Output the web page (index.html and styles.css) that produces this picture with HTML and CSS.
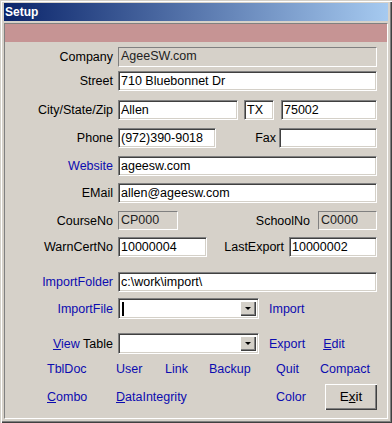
FILE: index.html
```html
<!DOCTYPE html>
<html lang="en">
<head>
  <meta charset="UTF-8">
  <title>Setup</title>
  <link rel="stylesheet" href="styles.css">
</head>
<body>
  <div class="window">
    <div class="titlebar">Setup</div>
    <div class="client">
      <div class="band"></div>
      <div class="form">
        <div class="row">
          <span class="label">Company</span>
          <span class="field disabled w-full">AgeeSW.com</span>
        </div>
        <div class="row row-street">
          <span class="label">Street</span>
          <span class="field w-full">710 Bluebonnet Dr</span>
        </div>
        <div class="row row-city">
          <span class="label">City/State/Zip</span>
          <span class="field w-city">Allen</span>
          <span class="field w-state">TX</span>
          <span class="field w-zip">75002</span>
        </div>
        <div class="row">
          <span class="label">Phone</span>
          <span class="field w-phone">(972)390-9018</span>
          <span class="label-inline">Fax</span>
          <span class="field w-phone"></span>
        </div>
        <div class="row">
          <span class="label link">Website</span>
          <span class="field w-full">ageesw.com</span>
        </div>
        <div class="row row-email">
          <span class="label">EMail</span>
          <span class="field w-full">allen@ageesw.com</span>
        </div>
        <div class="row row-course">
          <span class="label">CourseNo</span>
          <span class="field disabled w-course">CP000</span>
          <span class="label-inline gap-school">SchoolNo</span>
          <span class="field disabled w-school">C0000</span>
        </div>
        <div class="row row-warn">
          <span class="label">WarnCertNo</span>
          <span class="field w-warn">10000004</span>
          <span class="label-inline gap-export">LastExport</span>
          <span class="field w-export">10000002</span>
        </div>
        <div class="row row-folder">
          <span class="label link">ImportFolder</span>
          <span class="field w-full">c:\work\import\</span>
        </div>
        <div class="row row-combo row-file">
          <span class="label link">ImportFile</span>
          <span class="combo">
            <span class="caret"></span>
            <span class="combo-btn"><span class="arrow"></span></span>
          </span>
          <span class="link side-link">Import</span>
        </div>
        <div class="row row-combo row-view">
          <span class="label"><span class="link"><span class="u">V</span>iew</span> Table</span>
          <span class="combo">
            <span class="combo-btn"><span class="arrow"></span></span>
          </span>
          <span class="link side-link">Export</span>
          <span class="link side-link gap-edit"><span class="u">E</span>dit</span>
        </div>
      </div>
      <div class="links">
        <span class="link">TblDoc</span>
        <span class="link">User</span>
        <span class="link">Link</span>
        <span class="link">Backup</span>
        <span class="link">Quit</span>
        <span class="link">Compact</span>
        <span class="link"><span class="u">C</span>ombo</span>
        <span class="link span-3"><span class="u">D</span>ataIntegrity</span>
        <span class="link">Color</span>
        <span class="button">E<span class="u">x</span>it</span>
      </div>
    </div>
  </div>
</body>
</html>
```

FILE: styles.css
```css
body {
  margin: 0;
  background: #d6d1c9;
  font-family: "Liberation Sans", Arial, sans-serif;
  font-size: 12.5px;
  color: #000;
}
.window {
  width: 392px;
  height: 423px;
  box-sizing: border-box;
  padding: 3px 4px 4px 4px;
  background: #d6d1c9;
  box-shadow: inset 1px 1px 0 #d4d0c8, inset 2px 2px 0 #fff, inset -1px -1px 0 #404040, inset -2px -2px 0 #808080;
}
.titlebar {
  height: 18px;
  line-height: 18px;
  padding-left: 1px;
  background: linear-gradient(to right, #0a246a, #a6caf0);
  color: #fff;
  font-weight: bold;
  font-size: 12px;
}
.client {
  margin-top: 2px;
  height: 396px;
  box-sizing: border-box;
  border: 1px solid;
  border-color: #808080 #fff #fff #808080;
}
.band {
  height: 18px;
  background: #c69494;
}
.form {
  padding-top: 5px;
}
.row {
  display: flex;
  align-items: center;
  width: 372px;
  height: 20px;
  margin-top: 8px;
}
.row:first-child { margin-top: 0; }
.row-street { margin-top: 4px; }
.row-city { margin-top: 9px; }
.row-email { margin-top: 7px; }
.row-course { height: 19px; }
.row-warn { margin-top: 7px; }
.row-folder { margin-top: 15px; }
.row-combo { height: 21px; }
.row-file { margin-top: 6px; }
.row-view { margin-top: 14px; }

.label {
  width: 113px;
  flex: none;
  box-sizing: border-box;
  padding-right: 5px;
  text-align: right;
  white-space: nowrap;
}
.label-inline {
  flex: 1;
  text-align: right;
  padding-right: 3px;
  white-space: nowrap;
}
.gap-school { padding-right: 8px; }
.gap-export { padding-right: 5px; }

.link { color: #0c0cb0; }
.u { text-decoration: underline; }

.field {
  box-sizing: border-box;
  height: 100%;
  line-height: 18px;
  padding-left: 2px;
  background: #fff;
  border: 1px solid;
  border-color: #808080 #fff #fff #808080;
  box-shadow: inset 1px 1px 0 #404040, inset -1px -1px 0 #d4d0c8;
  white-space: nowrap;
  overflow: hidden;
  flex: none;
}
.field.disabled {
  background: #d6d1c9;
  box-shadow: none;
  color: #222;
  line-height: 17px;
}
.w-full { width: 259px; }
.w-city { width: 120px; }
.w-state { width: 30px; margin-left: 6px; }
.w-zip { width: 96px; margin-left: 7px; }
.w-phone { width: 98px; }
.w-course { width: 60px; }
.w-school { width: 59px; }
.w-warn { width: 89px; }
.w-export { width: 88px; }

.combo {
  box-sizing: border-box;
  width: 141px;
  height: 100%;
  display: flex;
  align-items: center;
  justify-content: space-between;
  padding: 2px;
  background: #fff;
  border: 1px solid;
  border-color: #808080 #fff #fff #808080;
  box-shadow: inset 1px 1px 0 #404040, inset -1px -1px 0 #d4d0c8;
  flex: none;
}
.caret {
  width: 2px;
  height: 14px;
  margin-left: 1px;
  background: #000;
}
.combo-btn {
  box-sizing: border-box;
  width: 16px;
  height: 100%;
  margin-left: auto;
  display: flex;
  align-items: center;
  justify-content: center;
  background: #d4d0c8;
  box-shadow: inset 1px 1px 0 #fff, inset -1px -1px 0 #404040, inset -2px -2px 0 #808080;
}
.arrow {
  width: 0;
  height: 0;
  border-left: 3px solid transparent;
  border-right: 3px solid transparent;
  border-top: 3px solid #000;
}
.side-link { margin-left: 10px; }
.gap-edit { margin-left: 18px; }

.links {
  display: grid;
  grid-template-columns: 69px 49px 44px 67px 44px auto;
  grid-template-rows: 14px 26px;
  row-gap: 8px;
  align-items: center;
  padding-left: 42px;
  margin-top: 8px;
  line-height: 14px;
}
.span-3 { grid-column: span 3; }
.button {
  box-sizing: border-box;
  width: 52px;
  height: 26px;
  margin-left: 5px;
  display: flex;
  align-items: center;
  justify-content: center;
  font-size: 13.5px;
  background: #d6d1c9;
  box-shadow: inset 1px 1px 0 #fff, inset -1px -1px 0 #404040, inset -2px -2px 0 #808080;
}
```
